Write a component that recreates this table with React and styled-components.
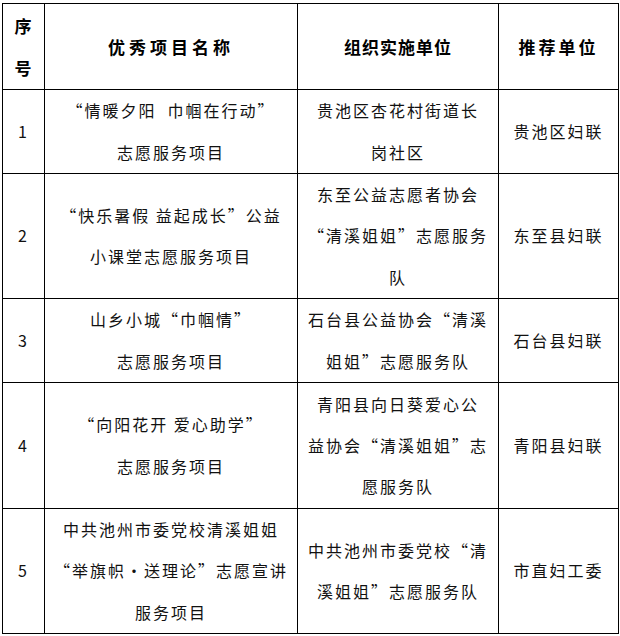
import styled, { createGlobalStyle } from "styled-components"

const Global = createGlobalStyle`
  html, body {
    margin: 0;
    padding: 0;
    background: #fff;
  }
  body {
    font-family: "Noto Sans CJK SC", "Noto Sans", sans-serif;
    color: #111;
  }
`

const Page = styled.div`
  padding: 3px 0 0 2px;
`

const Table = styled.table`
  border-collapse: collapse;
  table-layout: fixed;
  width: 616px;
`

const HeadCell = styled.th`
  border: 1px solid #000;
  font-size: 17px;
  font-weight: 700;
  line-height: 41.5px;
  letter-spacing: ${(p) => p.$ls || "1px"};
  text-align: center;
  vertical-align: middle;
  padding: 0;
  color: #000;
`

const Cell = styled.td`
  border: 1px solid #000;
  font-size: 16px;
  line-height: 41.3px;
  letter-spacing: 2px;
  text-align: center;
  vertical-align: middle;
  padding: 0 2px;
  white-space: pre;
`

const Row = styled.tr`
  height: ${(p) => p.$h}px;
`

const rows = [
  { h: 84, name: ["“情暖夕阳  巾帼在行动”", "志愿服务项目"], org: ["贵池区杏花村街道长", "岗社区"], rec: "贵池区妇联" },
  { h: 125, name: ["“快乐暑假 益起成长”公益", "小课堂志愿服务项目"], org: ["东至公益志愿者协会", "“清溪姐姐”志愿服务", "队"], rec: "东至县妇联" },
  { h: 84, name: ["山乡小城“巾帼情”", "志愿服务项目"], org: ["石台县公益协会“清溪", "姐姐”志愿服务队"], rec: "石台县妇联" },
  { h: 126, name: ["“向阳花开 爱心助学”", "志愿服务项目"], org: ["青阳县向日葵爱心公", "益协会“清溪姐姐”志", "愿服务队"], rec: "青阳县妇联" },
  { h: 125, name: ["中共池州市委党校清溪姐姐", "“举旗帜•送理论”志愿宣讲", "服务项目"], org: ["中共池州市委党校“清", "溪姐姐”志愿服务队"], rec: "市直妇工委" },
]

const Lines = ({ items }) =>
  items.map((t, i) => (
    <span key={i}>
      {i > 0 && <br />}
      {t}
    </span>
  ))

const App = () => {
  return (
    <Page>
      <Global />
      <Table>
        <colgroup>
          <col style={{ width: 42 }} />
          <col style={{ width: 253 }} />
          <col style={{ width: 201 }} />
          <col style={{ width: 120 }} />
        </colgroup>
        <thead>
          <Row $h={86}>
            <HeadCell>序<br />号</HeadCell>
            <HeadCell $ls="4px">优秀项目名称</HeadCell>
            <HeadCell $ls="1px">组织实施单位</HeadCell>
            <HeadCell $ls="3px">推荐单位</HeadCell>
          </Row>
        </thead>
        <tbody>
          {rows.map((r, i) => (
            <Row key={i} $h={r.h}>
              <Cell>{i + 1}</Cell>
              <Cell><Lines items={r.name} /></Cell>
              <Cell><Lines items={r.org} /></Cell>
              <Cell>{r.rec}</Cell>
            </Row>
          ))}
        </tbody>
      </Table>
    </Page>
  )
}

export default App
